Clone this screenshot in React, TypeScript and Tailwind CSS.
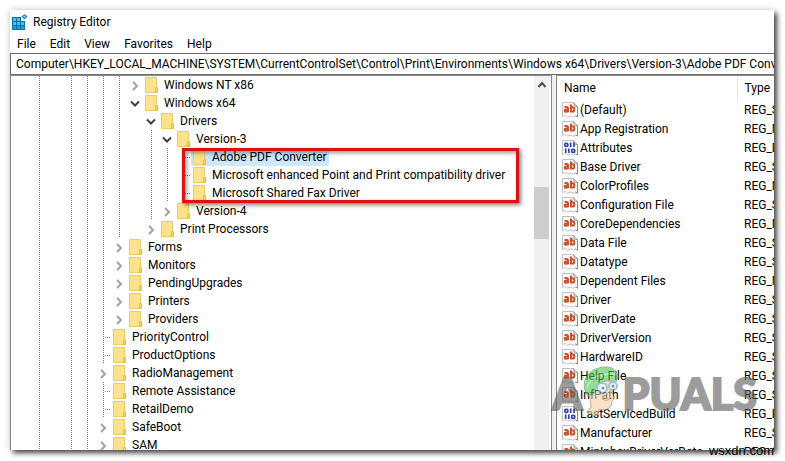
import React from "react";

type Cell = "line" | "blank" | "open" | "closed" | "leaf";

const CELLS: Record<string, Cell> = { "|": "line", " ": "blank", v: "open", ">": "closed", "-": "leaf" };

// Each prefix holds one character per indent level of the tree.
const KEYS: { prefix: string; name: string; selected?: boolean }[] = [
  { prefix: "| ||||>", name: "Windows NT x86" },
  { prefix: "| ||||v", name: "Windows x64" },
  { prefix: "| |||| v", name: "Drivers" },
  { prefix: "| |||| |v", name: "Version-3" },
  { prefix: "| |||| ||-", name: "Adobe PDF Converter", selected: true },
  { prefix: "| |||| ||-", name: "Microsoft enhanced Point and Print compatibility driver" },
  { prefix: "| |||| ||-", name: "Microsoft Shared Fax Driver" },
  { prefix: "| |||| |>", name: "Version-4" },
  { prefix: "| |||| >", name: "Print Processors" },
  { prefix: "| |||>", name: "Forms" },
  { prefix: "| |||>", name: "Monitors" },
  { prefix: "| |||>", name: "PendingUpgrades" },
  { prefix: "| |||>", name: "Printers" },
  { prefix: "| |||>", name: "Providers" },
  { prefix: "| ||-", name: "PriorityControl" },
  { prefix: "| ||-", name: "ProductOptions" },
  { prefix: "| ||>", name: "RadioManagement" },
  { prefix: "| ||-", name: "Remote Assistance" },
  { prefix: "| ||-", name: "RetailDemo" },
  { prefix: "| ||>", name: "SafeBoot" },
  { prefix: "| ||>", name: "SAM" },
];

const VALUES: [string, string][] = [
  ["(Default)", "REG_SZ"],
  ["App Registration", "REG_MULTI_SZ"],
  ["Attributes", "REG_DWORD"],
  ["Base Driver", "REG_SZ"],
  ["ColorProfiles", "REG_MULTI_SZ"],
  ["Configuration File", "REG_SZ"],
  ["CoreDependencies", "REG_MULTI_SZ"],
  ["Data File", "REG_SZ"],
  ["Datatype", "REG_SZ"],
  ["Dependent Files", "REG_MULTI_SZ"],
  ["Driver", "REG_SZ"],
  ["DriverDate", "REG_SZ"],
  ["DriverVersion", "REG_SZ"],
  ["HardwareID", "REG_SZ"],
  ["Help File", "REG_SZ"],
  ["InfPath", "REG_SZ"],
  ["LastServicedBuild", "REG_DWORD"],
  ["Manufacturer", "REG_SZ"],
  ["MinInboxDriverVerDate", "REG_SZ"],
];

const VLINE = "w-px bg-[repeating-linear-gradient(to_bottom,#777_0_1px,transparent_1px_2px)]";

function TreeCell({ kind, name }: { kind: Cell; name: string }) {
  if (kind === "blank") return <span className="w-4 shrink-0" />;
  if (kind === "line")
    return (
      <span className="flex w-4 shrink-0 justify-center self-stretch">
        <span className={VLINE} />
      </span>
    );
  if (kind === "leaf")
    return (
      <span className="flex w-4 shrink-0 items-center self-stretch pl-2">
        <span className={VLINE + " self-stretch"} />
        <span className="h-px flex-1 bg-[repeating-linear-gradient(to_right,transparent_0_1px,#777_1px_2px)]" />
      </span>
    );
  const open = kind === "open";
  return (
    <button
      type="button"
      aria-expanded={open}
      aria-label={name}
      className="flex w-4 shrink-0 items-center justify-center self-stretch"
    >
      <svg viewBox="0 0 12 12" className="size-3" fill="none" strokeWidth="2">
        {open ? <path d="M2 4.500 6 8.500 10 4.500" stroke="#404040" /> : <path d="M4 3 8 7 4 11" stroke="#a0a0a0" />}
      </svg>
    </button>
  );
}

function Folder() {
  return (
    <svg viewBox="0 0 13 16" className="h-4 w-[13px] shrink-0">
      <path d="M.5.5h11v9l1 1v5H.5z" fill="#fde28c" stroke="#e8cb6a" />
      <path d="M10.500 15.500v-4.500l1-1 1 1v4.500z" fill="#fbd75c" stroke="#e2b92e" strokeWidth=".8" />
    </svg>
  );
}

function ValueIcon({ binary }: { binary: boolean }) {
  return (
    <svg viewBox="0 0 16 16" className="size-4 shrink-0" fill="none">
      <path d="M.5.500h11l4 4v10.500l-2-1-2 1.200-3-1.200-3 1-2-1.500-3 1z" fill="#fff" stroke="#c0c0c0" />
      <path d="M11.500.5l1 3.500 3 .5v10.500l-2-1" stroke="#8a8a8a" />
      {binary ? (
        <g stroke="#2a46b8" strokeWidth="1.700">
          <rect x="2.800" y="3.300" width="3" height="3" rx="1" />
          <path d="M8.700 2.500v4.500M12 2.500v4.500M3.700 8.500v4.500M6.800 8.500v4.500" />
          <rect x="9.700" y="9.300" width="3" height="3" rx="1" />
        </g>
      ) : (
        <g stroke="#c8502c" strokeWidth="2">
          <path d="M2.500 5h2.300q1.200 0 1.200 1.300v4M6 7.500H4q-1.300 0-1.300 1.100T4 9.700q2 0 2-1.500" />
          <path d="M9 2.500v8M9 6.500q.5-1.300 1.700-1.300 1.600 0 1.600 2.200t-1.600 2.200q-1.200 0-1.700-1" />
        </g>
      )}
    </svg>
  );
}

function RegistryIcon() {
  return (
    <svg viewBox="0 0 16 16" className="size-4">
      <path d="M0 3h9v4h4v9H0z" fill="#0b6fa4" />
      <path d="M1 4h3v3H1zM5 4h3v3H5zM1 8h3v3H1zM5 8h3v3H5zM9 8h3v3H9z" fill="#3cc4f0" />
      <path d="M1 12h3v3H1zM5 12h3v3H5zM9 12h3v3H9z" fill="#1a9fd8" />
      <path d="m12.500 0 3 2.500-3 3-3-3z" fill="#2489b8" />
      <path d="m12.500 1.500 1.200 1-1.200 1.200-1.200-1.200z" fill="#8be0fa" />
    </svg>
  );
}

function Mascot() {
  return (
    <svg viewBox="0 0 40 50" className="h-[50px] w-10" strokeLinejoin="round">
      <path d="M9 23c-5 0-6 6-1 8l1 10-4 5c3 3 8 4 11 3l1-6c4 2 9 1 11-2 2-2 1-4 2-6l3-3-3-5 1-11-14-3z" fill="#f6cfa0" stroke="#857565" />
      <path d="M4 27C-1 16 5 5 17 2c9-3 18 0 19 9l-2 5c-7-3-14-1-18 4-2 4-3 8-6 9-3 0-5 0-6-2z" fill="#4fc552" stroke="#4f8a4f" />
      <path d="M5 22C8 11 20 6 35 9" fill="none" stroke="#8be38b" strokeWidth="1.500" />
      <circle cx="20" cy="22" r="5" fill="#e6f3fa" stroke="#5b9cc8" strokeWidth="2" />
      <circle cx="31" cy="20" r="4" fill="#e6f3fa" stroke="#5b9cc8" strokeWidth="2" />
      <circle cx="21" cy="22" r="1.500" fill="#444" />
      <circle cx="31" cy="20" r="1.500" fill="#444" />
      <path d="M20 33q5 3 9-1" fill="none" stroke="#857565" />
    </svg>
  );
}

export default function App() {
  return (
    <div className="relative h-screen overflow-hidden bg-white pt-[10px] pr-[11px] pb-[11px] pl-[10px] font-['Roboto','Open_Sans',sans-serif] text-[12px] text-black">
      <main className="flex h-full flex-col overflow-hidden bg-white shadow-[3px_3px_5px_rgba(0,0,0,0.7),0_0_8px_rgba(0,0,0,0.15)]">
        <header className="flex h-6 shrink-0 items-center gap-[5px] pl-[2px]">
          <RegistryIcon />
          <h1>Registry Editor</h1>
        </header>
        <nav className="flex h-[19px] shrink-0 items-center gap-[14px] pl-[7px]">
          {["File", "Edit", "View", "Favorites", "Help"].map((m) => (
            <button key={m} type="button">{m}</button>
          ))}
        </nav>
        <input
          aria-label="Registry path"
          readOnly
          className="h-[22px] w-full shrink-0 border border-r-0 border-[#6e6e6e] pl-[5px] outline-none"
          value="Computer\HKEY_LOCAL_MACHINE\SYSTEM\CurrentControlSet\Control\Print\Environments\Windows x64\Drivers\Version-3\Adobe PDF Converter"
        />
        <div className="flex min-h-0 flex-1 bg-[#f0f0f0]">
          <section className="flex w-[542px] shrink-0 overflow-hidden border border-b-0 border-[#828790] bg-white">
            <ul className="min-w-0 flex-1 overflow-hidden pl-5">
              {KEYS.map(({ prefix, name, selected }) => (
                <li key={name} className="flex h-[18px] items-center">
                  {prefix.split("").map((c, i) => (
                    <TreeCell key={i} kind={CELLS[c]} name={name} />
                  ))}
                  <span className={selected ? "flex h-full items-center bg-[#cce8ff] pr-[2px]" : "flex h-full items-center"}>
                    <span className="flex w-[21px] shrink-0 pl-[2px]"><Folder /></span>
                    <span className="whitespace-nowrap">{name}</span>
                  </span>
                </li>
              ))}
            </ul>
            <div className="mr-[2px] flex w-[15px] shrink-0 flex-col items-center bg-[#f0f0f0]">
              <svg viewBox="0 0 12 18" className="h-[18px] w-3" fill="none">
                <path d="m2.500 11 3.500-4 3.500 4" stroke="#505050" strokeWidth="2" />
              </svg>
              <div className="mt-[93px] h-[52px] w-full bg-[#cdcdcd]" />
            </div>
          </section>
          <section className="ml-1 min-w-0 flex-1 overflow-hidden border border-r-0 border-b-0 border-[#828790] bg-white">
            <table className="w-full table-fixed border-collapse text-left whitespace-nowrap">
              <thead>
                <tr className="h-6">
                  <th className="w-[180px] border-r border-[#e5e5e5] p-0 pl-[7px] font-normal">Name</th>
                  <th className="p-0 pl-[7px] font-normal">Type</th>
                </tr>
              </thead>
              <tbody>
                {VALUES.map(([name, type]) => (
                  <tr key={name} className="h-[19px]">
                    <td className="p-0 pl-[5px]">
                      <span className="flex h-[19px] items-center gap-[2px]">
                        <ValueIcon binary={type === "REG_DWORD"} />
                        {name}
                      </span>
                    </td>
                    <td className="p-0 pl-[7px]">{type}</td>
                  </tr>
                ))}
              </tbody>
            </table>
          </section>
        </div>
      </main>

      <div className="absolute top-[148px] left-[182px] h-[55px] w-[337px] border-[3px] border-[#dd1111] shadow-[2px_2px_4px_rgba(0,0,0,0.5),inset_2px_2px_4px_rgba(0,0,0,0.4)]" />

      <div className="absolute right-[28px] bottom-[45px] flex items-end font-['Lato',sans-serif] text-[43px] leading-[44px] font-black text-[#5c5c5c] opacity-60 [-webkit-text-stroke:2px_#5c5c5c]">
        <span>A</span>
        <Mascot />
        <span>PUALS</span>
      </div>
      <div className="absolute right-[11px] bottom-[2px] font-['Liberation_Sans',sans-serif] text-[13px] leading-4">wsxdn.com</div>
    </div>
  );
}
